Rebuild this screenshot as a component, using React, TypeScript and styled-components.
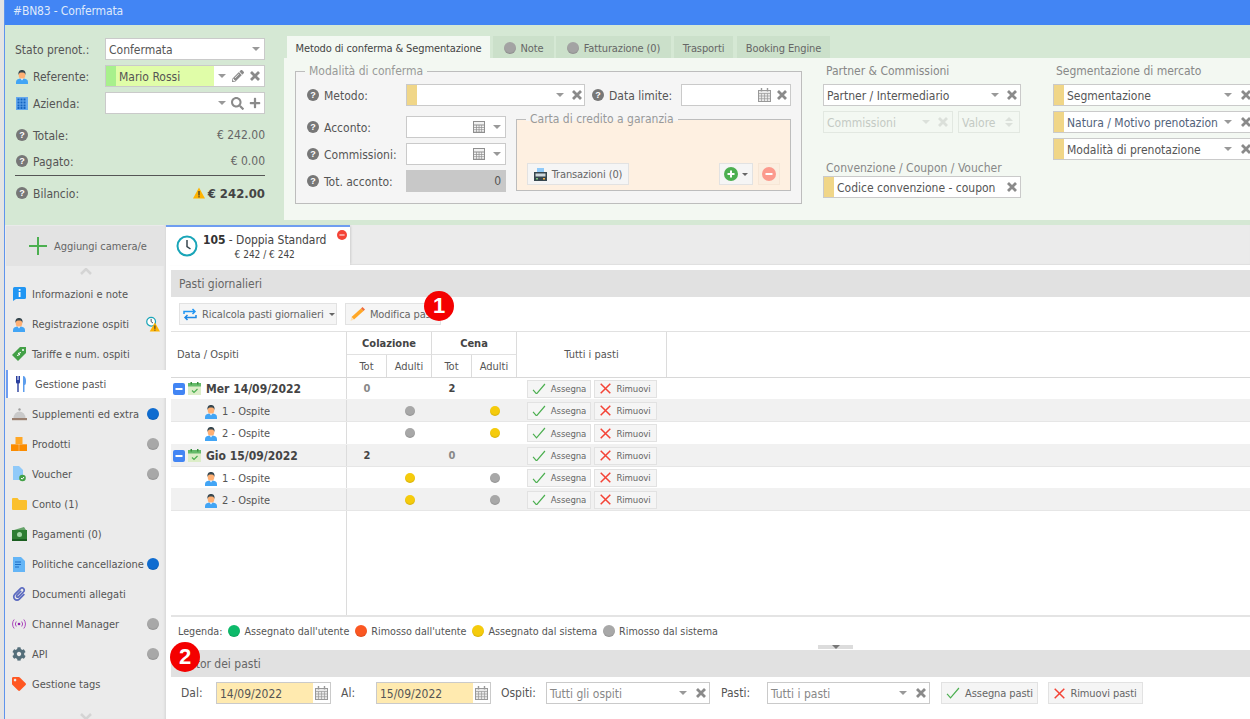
import React from 'react';
import styled, { createGlobalStyle } from 'styled-components';
import { FaPencilAlt, FaSearch, FaPlus, FaMinus, FaCog, FaPaperclip, FaTag } from 'react-icons/fa';

const Global = createGlobalStyle`
  html, body { margin: 0; padding: 0; background: #fff; }
  body { font-family: "DejaVu Sans Condensed", "DejaVu Sans", "Noto Sans", sans-serif; font-size: 12px; color: #444; }
  * { box-sizing: border-box; }
`;

const Page = styled.div`
  width: 1250px; height: 719px; overflow: hidden; display: flex; background: #e8e8e8;
`;
const Edge = styled.div`
  width: 5px; flex: none; background: #e4e4e4; border-right: 1px solid #5f94ec;
`;
const Main = styled.div`
  width: 1245px; flex: none; display: flex; flex-direction: column;
`;
const TitleBar = styled.div`
  height: 25px; flex: none; background: #4285f4; color: #dfe9fb; font-size: 12px; line-height: 22px; padding-left: 8px; letter-spacing: -0.15px;
`;
const TopPanel = styled.div`
  height: 200px; flex: none; display: flex; background: #d5e8d4; padding-bottom: 5px;
`;
const LeftForm = styled.div`
  width: 279px; flex: none; padding: 13px 19px 0 10px; display: flex; flex-direction: column;
`;
const FieldRow = styled.div`
  display: grid; grid-template-columns: 90px 160px; align-items: center; height: 22px; margin-bottom: 5px;
`;
const Label = styled.div`
  display: flex; align-items: center; gap: 4px; color: #555; white-space: nowrap; padding-top: 1px;
`;
const IconSlot = styled.span`
  width: 14px; display: inline-flex; justify-content: center; align-items: center; flex: none; margin-top: -1px;
`;
const Field = styled.div<{ $w?: number; $disabled?: boolean; $bg?: string; $shift?: number }>`
  ${p => (p.$w ? `width: ${p.$w}px; flex: none;` : '')}
  ${p => (p.$shift ? `margin-top: ${p.$shift}px;` : '')}
  height: 22px; border: 1px solid ${p => (p.$disabled ? '#e2e8e1' : '#cacaca')};
  background: ${p => (p.$disabled ? 'transparent' : p.$bg || '#fff')};
  display: flex; align-items: center; color: ${p => (p.$disabled ? '#c4cac4' : '#555')}; overflow: hidden;
`;
const Accent = styled.span<{ $color: string }>`
  width: 10px; align-self: stretch; flex: none; background: ${p => p.$color};
`;
const FieldText = styled.span<{ $bg?: string; $color?: string }>`
  flex: 1; min-width: 0; padding: 1px 0 0 3px; white-space: nowrap; overflow: hidden; align-self: stretch; line-height: 20px;
  ${p => (p.$bg ? `background: ${p.$bg};` : '')}
  ${p => (p.$color ? `color: ${p.$color};` : '')}
`;
const Tools = styled.span<{ $gap?: number; $pr?: number; $pl?: number }>`
  display: inline-flex; align-items: center; gap: ${p => p.$gap ?? 7}px; padding: 0 ${p => p.$pr ?? 4}px 0 ${p => p.$pl ?? 6}px; color: #8a8a8a; flex: none;
`;
const Caret = styled.span<{ $light?: boolean }>`
  width: 0; height: 0; border-left: 4px solid transparent; border-right: 4px solid transparent;
  border-top: 4px solid ${p => (p.$light ? '#dbe0da' : '#999')}; display: inline-block;
`;
const SumRow = styled.div<{ $bold?: boolean; $h?: number }>`
  height: ${p => p.$h ?? 26}px; display: flex; justify-content: space-between; align-items: center;
  color: #666; ${p => (p.$bold ? 'font-weight: 700; font-size: 13px; color: #444;' : '')}
`;
const SumValue = styled.span`
  display: inline-flex; align-items: center; gap: 3px;
`;
const SumRule = styled.div`
  height: 1px; background: #555; margin: 1px 0 5px;
`;
const SumLabelWrap = styled(Label)`
  font-weight: 400; font-size: 12px; color: #555;
`;
const SumGap = styled.div`
  height: 3px; flex: none;
`;
const Right = styled.div`
  flex: 1; min-width: 0; display: flex; flex-direction: column; padding-top: 11px;
`;
const TabStrip = styled.div`
  display: flex; height: 22px; flex: none; gap: 3px; padding-left: 3px; font-size: 11px; letter-spacing: -0.12px;
`;
const Tab = styled.div<{ $w: number; $active?: boolean; $ml?: number }>`
  width: ${p => p.$w}px; flex: none; display: flex; align-items: center; justify-content: center; gap: 5px;
  ${p => (p.$ml ? `margin-left: ${p.$ml}px;` : '')}
  background: ${p => (p.$active ? '#f3f8f2' : '#cbe0ca')}; color: ${p => (p.$active ? '#444' : '#666')}; white-space: nowrap; padding-top: 2px;
`;
const Dot = styled.span<{ $color: string; $size?: number }>`
  width: ${p => p.$size ?? 12}px; height: ${p => p.$size ?? 12}px; border-radius: 50%; flex: none; display: inline-block;
  background: ${p => p.$color}; box-shadow: inset 0 -1px 1px rgba(0,0,0,.12);
`;
const TabBody = styled.div`
  flex: 1; background: #f3f8f2; display: flex; padding: 13px 0 0 11px; overflow: hidden;
`;
const Group = styled.div<{ $w: number; $h: number; $bg: string }>`
  width: ${p => p.$w}px; height: ${p => p.$h}px; flex: none;
  border: 1px solid #bdbdbd; background: ${p => p.$bg};
`;
const Legend = styled.div`
  color: #999; font-size: 12px; line-height: 14px; margin: -8px 0 0 9px; padding: 0 4px; width: fit-content; white-space: nowrap;
  background: linear-gradient(#f3f8f2 9px, #f5f5f5 9px);
`;
const CardLegend = styled(Legend)`
  background: linear-gradient(#f5f5f5 9px, #fef0e1 9px);
`;
const FormGrid = styled.div`
  display: flex; flex-direction: column; padding: 6px 10px 0 10px;
`;
const FormLine = styled.div`
  display: flex; align-items: center; height: 22px;
`;
const SplitRow = styled.div`
  display: flex; margin-top: 10px;
`;
const ColStack = styled.div`
  display: flex; flex-direction: column; gap: 5px; width: 200px; flex: none;
`;
const StackLabel = styled(Label)`
  width: 100px; flex: none; height: 22px;
`;
const StackRow = styled.div`
  display: flex; align-items: center;
`;
const GapLabel = styled(Label)`
  margin-left: 6px; width: 90px; flex: none;
`;
const TotalField = styled(Field)`
  background: #c8c8c8; border-color: #c8c8c8; justify-content: flex-end; padding-right: 4px; color: #555;
`;
const CardBox = styled(Group)`
  margin: 3px 0 0 10px;
`;
const CardActions = styled.div`
  display: flex; align-items: center; padding: 37px 10px 0 10px;
`;
const Btn = styled.div<{ $w?: number; $h?: number; $fs?: number; $start?: number; $gap?: number }>`
  ${p => (p.$w ? `width: ${p.$w}px;` : '')} height: ${p => p.$h ?? 22}px; flex: none; display: inline-flex; align-items: center;
  justify-content: ${p => (p.$start !== undefined ? 'flex-start' : 'center')}; gap: ${p => p.$gap ?? 5}px;
  ${p => (p.$start !== undefined ? `padding-left: ${p.$start}px;` : '')}
  background: #f5f5f5; border: 1px solid #e2e2e2; color: #666; font-size: ${p => p.$fs ?? 11}px; white-space: nowrap; letter-spacing: -0.1px;
`;
const Spacer = styled.div`
  flex: 1;
`;
const GhostBtn = styled(Btn)`
  background: #fbeee0; border-color: #f6e6d6; margin-left: 5px;
`;
const SideCol = styled.div<{ $w: number; $ml: number }>`
  width: ${p => p.$w}px; flex: none; margin-left: ${p => p.$ml}px; display: flex; flex-direction: column; gap: 5px;
`;
const ColTitle = styled.div`
  color: #888; height: 14px; line-height: 14px; margin: -7px 0 1px 3px; white-space: nowrap;
`;
const ColTitleLow = styled(ColTitle)`
  margin: 23px 0 0 3px;
`;
const DisabledRow = styled.div`
  display: flex; gap: 5px;
`;
const Spin = styled.span`
  display: inline-flex; flex-direction: column; gap: 2px; margin: 0 6px 0 auto; flex: none;
`;
const SpinUp = styled.span`
  width: 0; height: 0; border-left: 4px solid transparent; border-right: 4px solid transparent; border-bottom: 4px solid #dbe0da;
`;
const SpinDown = styled(SpinUp)`
  border-bottom: 0; border-top: 4px solid #dbe0da;
`;
const ValueText = styled.span`
  padding: 1px 0 0 3px; line-height: 20px; white-space: nowrap;
`;
const Lower = styled.div`
  flex: 1; min-height: 0; display: flex;
`;
const Sidebar = styled.div`
  width: 161px; flex: none; background: #ebebeb; display: flex; flex-direction: column; align-items: stretch; box-shadow: inset -3px 0 3px -2px rgba(0,0,0,.1);
`;
const AddBtn = styled.div`
  height: 40px; margin: 1px 2px 0 1px; background: #e3e3e3; display: flex; align-items: center; padding-left: 23px; gap: 7px; color: #666; font-size: 11px; flex: none; letter-spacing: -0.05px;
`;
const AddText = styled.span`
  padding-top: 1px;
`;
const ChevronUpBox = styled.div`
  height: 13px; display: flex; justify-content: center; align-items: flex-start; padding-top: 2px; flex: none;
`;
const ChevronDownBox = styled.div`
  height: 14px; margin-bottom: -4px; display: flex; justify-content: center; align-items: center; flex: none;
`;
const MenuList = styled.div`
  display: flex; flex-direction: column; flex: none;
`;
const MenuItem = styled.div<{ $active?: boolean }>`
  height: 30px; display: flex; align-items: center; padding-left: 4px; gap: 3px; color: #555; font-size: 11px; white-space: nowrap;
  ${p => (p.$active ? 'background: #fff; border-left: 2px solid #6f9df0; margin: 1px 0 1px 1px; height: 28px; padding-left: 3px; gap: 4px;' : '')}
`;
const MenuIcon = styled.span`
  width: 20px; height: 18px; flex: none; display: inline-flex; justify-content: center; align-items: center;
`;
const MenuLabel = styled.span`
  flex: 1; min-width: 0;
`;
const MenuEnd = styled.span`
  width: 14px; margin-right: 6px; flex: none; display: inline-flex; justify-content: center;
`;
const Content = styled.div`
  flex: 1; min-width: 0; display: flex; flex-direction: column; background: #fff; position: relative;
`;
const RoomBar = styled.div`
  height: 40px; flex: none; background: #ebebeb; display: flex; box-shadow: inset 0 -1px 1px rgba(0,0,0,.05);
`;
const RoomTab = styled.div`
  width: 184px; flex: none; background: #fff; border-top: 2px solid #6f9df0; display: flex; align-items: center; padding-left: 10px; gap: 5px; position: relative; box-shadow: 2px 0 2px -1px rgba(0,0,0,.12);
`;
const RoomText = styled.div`
  display: flex; flex-direction: column; align-items: center; line-height: 14px; color: #444; margin-top: 3px;
`;
const RoomTitle = styled.div`
  font-size: 12px; white-space: nowrap; letter-spacing: -0.03px;
`;
const RoomNum = styled.b`
  font-weight: 700; color: #333;
`;
const RoomPrice = styled.div`
  font-size: 10px; margin-top: 1px;
`;
const RoomClose = styled.span`
  position: absolute; right: 3px; top: 3px; width: 10px; height: 10px; border-radius: 50%; background: #f44336; display: flex; align-items: center; justify-content: center;
`;
const Pane = styled.div`
  flex: 1; min-height: 0; margin: 5px 0 0 5px; display: flex; flex-direction: column;
`;
const SectionTitle = styled.div`
  height: 27px; flex: none; background: #e1e1e1; color: #666; line-height: 28px; padding-left: 8px;
`;
const Toolbar = styled.div`
  height: 35px; flex: none; display: flex; align-items: flex-start; gap: 8px; padding: 6px 0 0 8px; border-bottom: 1px solid #e1e1e1;
`;
const ToolCaret = styled.span`
  width: 0; height: 0; border-left: 3px solid transparent; border-right: 3px solid transparent; border-top: 3px solid #666; display: inline-block;
`;
const GridRow = styled.div<{ $h: number; $shade?: boolean }>`
  height: ${p => p.$h}px; flex: none; display: grid; grid-template-columns: 176px 40px 45px 40px 45px 150px 1fr;
  background: ${p => (p.$shade ? '#f1f1f1' : '#fff')}; border-bottom: 1px solid ${p => (p.$shade ? '#e6e6e6' : '#f1f1f1')};
`;
const HeadGrid = styled.div`
  height: 46px; flex: none; display: grid; grid-template-columns: 176px 85px 85px 150px 1fr; grid-template-rows: 23px 22px; border-bottom: 1px solid #d8d8d8;
`;
const HeadCell = styled.div<{ $span?: boolean; $left?: boolean; $bold?: boolean; $under?: boolean }>`
  display: flex; align-items: center; justify-content: ${p => (p.$left ? 'flex-start' : 'center')}; font-size: 11px; color: #555;
  ${p => (p.$left ? 'padding-left: 6px;' : '')}
  ${p => (p.$span ? 'grid-row: 1 / span 2;' : '')}
  ${p => (p.$bold ? 'font-weight: 700; color: #444;' : '')}
  ${p => (p.$under ? 'border-bottom: 1px solid #e1e1e1;' : '')}
  border-right: 1px solid #dcdcdc;
`;
const HeadSplit = styled.div<{ $col: number }>`
  display: grid; grid-template-columns: 40px 45px; grid-row: 2; grid-column: ${p => p.$col};
`;
const HeadSub = styled.div`
  display: flex; align-items: center; justify-content: center; font-size: 11px; color: #555; border-right: 1px solid #dcdcdc;
`;
const NameCell = styled.div<{ $group?: boolean }>`
  display: flex; align-items: center; border-right: 1px solid #dcdcdc; white-space: nowrap;
  ${p => (p.$group ? 'padding-left: 2px; gap: 3px; font-weight: 700; color: #444; font-size: 12px;' : 'padding: 1px 0 0 33px; gap: 4px; color: #555; font-size: 11px;')}
`;
const ValCell = styled.div<{ $dim?: boolean }>`
  display: flex; align-items: center; justify-content: center; font-weight: 700; color: ${p => (p.$dim ? '#888' : '#444')}; font-size: 11px;
`;
const ActionCell = styled.div`
  display: flex; align-items: center; gap: 3px; padding-left: 10px;
`;
const Filler = styled.div`
  flex: 1; min-height: 0; border-bottom: 2px solid #e4e4e4;
`;
const FillerCol = styled.div`
  width: 176px; height: 100%; border-right: 1px solid #dcdcdc;
`;
const LegendBar = styled.div`
  height: 28px; flex: none; display: flex; align-items: center; gap: 6px; padding: 0 0 0 7px; font-size: 10.7px; color: #555; white-space: nowrap;
`;
const LegendItem = styled.span`
  display: inline-flex; align-items: center; gap: 4px;
`;
const Splitter = styled.div`
  height: 5px; flex: none; display: flex; padding-left: 647px;
`;
const SplitterHandle = styled.div`
  width: 35px; height: 4px; background: #dcdcdc; display: flex; justify-content: center;
`;
const SmallCaret = styled.span`
  width: 0; height: 0; border-left: 4px solid transparent; border-right: 4px solid transparent; border-top: 4px solid #777;
`;
const FilterBar = styled.div`
  height: 42px; flex: none; display: flex; align-items: flex-start; padding: 5px 0 0 10px; white-space: nowrap; color: #555;
`;
const FilterLabel = styled.span<{ $w: number }>`
  width: ${p => p.$w}px; flex: none; line-height: 23px;
`;
const DateText = styled.span`
  flex: 1; align-self: stretch; background: #ffeaaf; padding: 1px 0 0 3px; line-height: 20px; color: #555;
`;
const CalBox = styled.span`
  width: 17px; flex: none; display: inline-flex; justify-content: center;
`;
const Gap = styled.span<{ $w: number }>`
  width: ${p => p.$w}px; flex: none;
`;
const Badge = styled.div<{ $x: number; $y: number }>`
  position: absolute; left: ${p => p.$x}px; top: ${p => p.$y}px; width: 30px; height: 30px; border-radius: 50%; background: #f40000;
  color: #fff; font: 700 22px "Liberation Sans", sans-serif; display: flex; align-items: center; justify-content: center; z-index: 5;
`;
const HelpDot = styled.span`
  width: 12px; height: 12px; border-radius: 50%; background: #777; color: #fff; font: 700 9px/12px "Liberation Sans", sans-serif; text-align: center; display: inline-block; flex: none;
`;

const Help = () => <IconSlot><HelpDot>?</HelpDot></IconSlot>;
const X = ({ c = '#8a8a8a' }: { c?: string }) => (
  <svg width="10" height="10" viewBox="0 0 10 10" fill="none" stroke={c} strokeWidth="2.800"><path d="M1 1l8 8M9 1l-8 8" /></svg>
);

const Person = () => (
  <svg width="14" height="15" viewBox="0 0 14 15">
    <path d="M1 15v-2c0-2 2-3 4-3.400h4c2 .4 4 1.400 4 3.400v2z" fill="#42a5f5" />
    <ellipse cx="7" cy="6" rx="3.300" ry="4" fill="#ffb074" />
    <path d="M3.500 6C3 2 5 1 7 1s4 1 3.500 5C10 4 9 3.500 7 3.500S4 4 3.500 6z" fill="#37474f" />
    <path d="M5.500 9.500L7 11.500l1.500-2z" fill="#e8f4ff" />
  </svg>
);
const Building = () => (
  <svg width="12" height="13" viewBox="0 0 12 13">
    <rect width="12" height="13" fill="#64a8ee" />
    {[1.5, 4.5, 7.5].map(x => [1.5, 4.5, 7.5, 10].map(y => <rect key={`${x}-${y}`} x={x} y={y} width="2" height="2" fill="#1565c0" />))}
  </svg>
);
const Warn = ({ s = 12 }: { s?: number }) => (
  <svg width={s} height={s} viewBox="0 0 12 12">
    <path d="M6 .5L12 11.500H0z" fill="#ffb300" />
    <rect x="5.400" y="4" width="1.200" height="4.500" fill="#333" />
    <rect x="5.400" y="9.200" width="1.200" height="1.200" fill="#333" />
  </svg>
);
const ClockWarn = () => (
  <svg width="15" height="16" viewBox="0 0 15 16">
    <circle cx="5.500" cy="5.500" r="4.700" fill="#fff" stroke="#19a5b8" strokeWidth="1.300" />
    <path d="M5.500 2.500v3l2 1.500" stroke="#37474f" fill="none" />
    <path d="M9.500 6.500L15 16H4z" fill="#ffb300" />
    <rect x="9" y="9.500" width="1.100" height="3.700" fill="#333" />
    <rect x="9" y="14" width="1.100" height="1.100" fill="#333" />
  </svg>
);
const Calendar = () => (
  <svg width="13" height="14" viewBox="0 0 13 14" fill="none" stroke="#999">
    <rect x=".5" y="2.500" width="12" height="11" fill="#e9e9e9" />
    <path d="M.5 5.500h12M.5 8h12M.5 10.700h12M3.500 5.500v8M6.500 5.500v8M9.500 5.500v8" strokeWidth=".7" />
    <path d="M3.500 0v3.500M9.500 0v3.500" strokeWidth="1.400" />
  </svg>
);
const Calc = () => (
  <svg width="12" height="12" viewBox="0 0 12 12">
    <rect width="12" height="12" fill="#8f8f8f" />
    <rect x="1" y="1" width="10" height="2.500" fill="#f2f2f2" />
    {[4.5, 6.8, 9.1].map(y => [1, 3.7, 6.4, 9].map(x => <rect key={`${x}-${y}`} x={x} y={y} width="2" height="1.600" fill="#f2f2f2" />))}
  </svg>
);
const Check = ({ s = 14 }: { s?: number }) => (
  <svg width={s} height={s * 0.85} viewBox="0 0 14 12" fill="none" stroke="#4caf50" strokeWidth="1.200"><path d="M1 7l3.500 4L13 1" /></svg>
);
const Cross = ({ s = 11 }: { s?: number }) => (
  <svg width={s} height={s} viewBox="0 0 11 11" fill="none" stroke="#f44336" strokeWidth="1.500"><path d="M.7.7l9.600 9.600M10.300.7L.7 10.300" /></svg>
);
const CardTerminal = () => (
  <svg width="13" height="13" viewBox="0 0 13 13">
    <rect x="3" y="0" width="7" height="5" fill="#90caf9" />
    <rect x="0" y="4" width="13" height="9" fill="#37474f" />
    <rect x="1.500" y="5.500" width="10" height="3" fill="#cfd8dc" />
    <rect x="2" y="10" width="2" height="1.500" fill="#81c784" />
    <rect x="9" y="10" width="2" height="1.500" fill="#ffb74d" />
  </svg>
);
const Sync = () => (
  <svg width="14" height="13" viewBox="0 0 14 13" fill="none" stroke="#2196f3" strokeWidth="1.500">
    <path d="M1 6V3.500h11M9.500 1L12 3.500 9.500 6" />
    <path d="M13 7v2.500H2M4.500 7L2 9.500 4.500 12" stroke="#1e88e5" />
  </svg>
);
const Pencil = () => (
  <svg width="18" height="16" viewBox="0 0 18 16">
    <path d="M2.500 11L12 2.500 14.500 5 5 13.500z" fill="#ffa726" />
    <path d="M12 2.500L13.500 1 16 3.500 14.500 5z" fill="#ef6c3a" />
    <path d="M2.500 11L1.500 15 5 13.500z" fill="#ffe0b2" />
  </svg>
);
const ClockIcon = () => (
  <svg width="22" height="22" viewBox="0 0 22 22" fill="none">
    <circle cx="11" cy="11" r="9.500" stroke="#19a5b8" strokeWidth="2" />
    <path d="M11 5v6.500l3.500 2.500" stroke="#37474f" strokeWidth="1.500" />
  </svg>
);
const BigPlus = () => (
  <svg width="18" height="18" viewBox="0 0 18 18"><path d="M9 0v18M0 9h18" stroke="#4caf50" strokeWidth="2" /></svg>
);
const ChevronIcon = ({ down }: { down?: boolean }) => (
  <svg width="12" height="7" viewBox="0 0 12 7" fill="none" stroke="#d4d4d4" strokeWidth="2.500"><path d={down ? 'M1 1l5 5 5-5' : 'M1 6l5-5 5 5'} /></svg>
);
const DayMinus = () => (
  <svg width="12" height="12" viewBox="0 0 12 12"><rect width="12" height="12" rx="2" fill="#4285f4" /><rect x="2.500" y="5" width="7" height="2" fill="#fff" /></svg>
);
const DayCal = () => (
  <svg width="15" height="13" viewBox="0 0 15 13">
    <rect y="1" width="13" height="12" fill="#dcedc8" />
    <rect y="1" width="13" height="3.500" fill="#66bb6a" />
    <rect x="2.500" width="1.500" height="2.500" fill="#388e3c" />
    <rect x="9" width="1.500" height="2.500" fill="#388e3c" />
    <path d="M4 8.500l2 2 3.500-3.500" stroke="#4caf50" strokeWidth="1.200" fill="none" />
  </svg>
);

const InfoIcon = () => (
  <svg width="13" height="14" viewBox="0 0 13 14"><path d="M1.500 0h10A1.500 1.500 0 0 1 13 1.500v9a1.500 1.500 0 0 1-1.500 1.500H3L0 14V1.500A1.500 1.500 0 0 1 1.500 0z" fill="#2196f3" /><rect x="5.700" y="2" width="1.800" height="1.800" fill="#fff" /><rect x="5.700" y="5" width="1.800" height="5" fill="#fff" /></svg>
);
const PriceTag = () => (
  <svg width="14" height="14" viewBox="0 0 14 14"><path d="M8 0l6 0 0 6-8 8-6-6z" fill="#43a047" /><circle cx="11" cy="3" r="1" fill="#fff" /><path d="M5 8.500l3-1-2-1 3-1" stroke="#fff" fill="none" /></svg>
);
const Cutlery = () => (
  <svg width="12" height="16" viewBox="0 0 12 16"><path d="M1 0v6c0 1 .7 1.500 1.300 1.500V16h1.400V7.500C4.300 7.500 5 7 5 6V0H4v4H3.500V0h-1v4H2V0z" fill="#2a3f9e" /><path d="M8 0c2 0 3 2 3 5s-.6 4-1.500 4V16H8z" fill="#5c9ded" /></svg>
);
const Cloche = () => (
  <svg width="15" height="13" viewBox="0 0 15 13"><circle cx="7.500" cy="1.500" r="1.200" fill="#9e9e9e" /><path d="M1.500 10a6 6.500 0 0 1 12 0z" fill="#c9c9c9" /><rect y="10" width="15" height="2.200" fill="#9a8070" /></svg>
);
const Boxes = () => (
  <svg width="16" height="14" viewBox="0 0 16 14"><rect x="4.500" width="7" height="7" fill="#ffa726" /><rect y="7.300" width="7.800" height="6.700" fill="#fb8c00" /><rect x="8.200" y="7.300" width="7.800" height="6.700" fill="#fb8c00" /></svg>
);
const VoucherDoc = () => (
  <svg width="13" height="16" viewBox="0 0 13 16"><path d="M0 0h6l4 4v10H0z" fill="#90caf9" /><circle cx="9.500" cy="12" r="3.300" fill="#43a047" /><path d="M8 12l1.200 1.200L11 11" stroke="#fff" fill="none" /></svg>
);
const Folder = () => (
  <svg width="15" height="12" viewBox="0 0 15 12"><path d="M1 0h4.500l1.500 2h7a1 1 0 0 1 1 1v8a1 1 0 0 1-1 1H1a1 1 0 0 1-1-1V1a1 1 0 0 1 1-1z" fill="#fbc02d" /></svg>
);
const Money = () => (
  <svg width="15" height="14" viewBox="0 0 15 14"><path d="M2 3l10-3 2 3z" fill="#66a36a" /><rect y="3" width="15" height="9" fill="#2e7d32" /><ellipse cx="7.500" cy="7.500" rx="2.500" ry="2.500" fill="#a5d6a7" /><rect y="12" width="15" height="2" fill="#1b5e20" /></svg>
);
const PolicyDoc = () => (
  <svg width="12" height="15" viewBox="0 0 12 15"><path d="M0 0h8l4 4v11H0z" fill="#64b5f6" /><path d="M2 5h6M2 7.500h6M2 10h4" stroke="#1565c0" strokeWidth=".9" /></svg>
);
const Broadcast = () => (
  <svg width="14" height="12" viewBox="0 0 14 12" fill="none" stroke="#ab47bc" strokeWidth="1">
    <circle cx="7" cy="6" r="1.300" fill="#8e24aa" stroke="none" />
    <path d="M4.300 3.500a4 4 0 0 0 0 5M9.700 3.500a4 4 0 0 1 0 5M2.200 1.500a7 7 0 0 0 0 9M11.800 1.500a7 7 0 0 1 0 9" />
  </svg>
);

const menu: { label: string; icon: React.ReactNode; end?: React.ReactNode; active?: boolean }[] = [
  { label: 'Informazioni e note', icon: <InfoIcon /> },
  { label: 'Registrazione ospiti', icon: <Person />, end: <ClockWarn /> },
  { label: 'Tariffe e num. ospiti', icon: <PriceTag /> },
  { label: 'Gestione pasti', icon: <Cutlery />, active: true },
  { label: 'Supplementi ed extra', icon: <Cloche />, end: <Dot $color="#0f6cd0" /> },
  { label: 'Prodotti', icon: <Boxes />, end: <Dot $color="#a8a8a8" /> },
  { label: 'Voucher', icon: <VoucherDoc />, end: <Dot $color="#a8a8a8" /> },
  { label: 'Conto (1)', icon: <Folder /> },
  { label: 'Pagamenti (0)', icon: <Money /> },
  { label: 'Politiche cancellazione', icon: <PolicyDoc />, end: <Dot $color="#0f6cd0" /> },
  { label: 'Documenti allegati', icon: <FaPaperclip size={14} color="#5c6bc0" /> },
  { label: 'Channel Manager', icon: <Broadcast />, end: <Dot $color="#a8a8a8" /> },
  { label: 'API', icon: <FaCog size={14} color="#546e7a" />, end: <Dot $color="#a8a8a8" /> },
  { label: 'Gestione tags', icon: <FaTag size={14} color="#ff5722" /> },
];

const GRAY = '#a8a8a8';
const YEL = '#f5cb0c';
const rows: { h: number; shade?: boolean; name: string; group?: boolean; a?: string; b?: string; aDim?: boolean; bDim?: boolean; ca?: string; cb?: string }[] = [
  { h: 22, name: 'Mer 14/09/2022', group: true, a: '0', aDim: true, b: '2' },
  { h: 22, shade: true, name: '1 - Ospite', ca: GRAY, cb: YEL },
  { h: 23, name: '2 - Ospite', ca: GRAY, cb: YEL },
  { h: 22, shade: true, name: 'Gio 15/09/2022', group: true, a: '2', b: '0', bDim: true },
  { h: 22, name: '1 - Ospite', ca: YEL, cb: GRAY },
  { h: 22, shade: true, name: '2 - Ospite', ca: YEL, cb: GRAY },
];

export default function App() {
  return (
    <Page>
      <Global />
      <Edge />
      <Main>
        <TitleBar>#BN83 - Confermata</TitleBar>
        <TopPanel>
          <LeftForm>
            <FieldRow>
              <Label>Stato prenot.:</Label>
              <Field><FieldText>Confermata</FieldText><Tools $pr={4}><Caret /></Tools></Field>
            </FieldRow>
            <FieldRow>
              <Label><IconSlot><Person /></IconSlot>Referente:</Label>
              <Field>
                <Accent $color="#a8f08c" />
                <FieldText $bg="#e0fda8">Mario Rossi</FieldText>
                <Tools $gap={6} $pr={4} $pl={4}><Caret /><FaPencilAlt size={12} /><X /></Tools>
              </Field>
            </FieldRow>
            <FieldRow>
              <Label><IconSlot><Building /></IconSlot>Azienda:</Label>
              <Field><FieldText /><Tools $gap={5} $pr={3}><Caret /><FaSearch size={13} /><FaPlus size={12} /></Tools></Field>
            </FieldRow>
            <SumGap />
            <SumRow><Label><Help />Totale:</Label><SumValue>€ 242.00</SumValue></SumRow>
            <SumRow><Label><Help />Pagato:</Label><SumValue>€ 0.00</SumValue></SumRow>
            <SumRule />
            <SumRow $bold $h={24}><SumLabelWrap><Help />Bilancio:</SumLabelWrap><SumValue><Warn />€ 242.00</SumValue></SumRow>
          </LeftForm>
          <Right>
            <TabStrip>
              <Tab $w={203} $active>Metodo di conferma &amp; Segmentazione</Tab>
              <Tab $w={61}><Dot $color="#a3a3a3" />Note</Tab>
              <Tab $w={115} $ml={-1}><Dot $color="#a3a3a3" />Fatturazione (0)</Tab>
              <Tab $w={59}>Trasporti</Tab>
              <Tab $w={93} $ml={1}>Booking Engine</Tab>
            </TabStrip>
            <TabBody>
              <Group $w={507} $h={133} $bg="#f5f5f5">
                <Legend>Modalità di conferma</Legend>
                <FormGrid>
                  <FormLine>
                    <StackLabel><Help />Metodo:</StackLabel>
                    <Field $w={179}><Accent $color="#f0d688" /><FieldText /><Tools $gap={8} $pr={2}><Caret /><X /></Tools></Field>
                    <GapLabel><Help />Data limite:</GapLabel>
                    <Field $w={110}><FieldText /><Tools $gap={6} $pr={3}><Calendar /><X /></Tools></Field>
                  </FormLine>
                  <SplitRow>
                    <ColStack>
                      <StackRow><StackLabel><Help />Acconto:</StackLabel><Field $w={100}><FieldText /><Tools $gap={8} $pr={4}><Calc /><Caret /></Tools></Field></StackRow>
                      <StackRow><StackLabel><Help />Commissioni:</StackLabel><Field $w={100}><FieldText /><Tools $gap={8} $pr={4}><Calc /><Caret /></Tools></Field></StackRow>
                      <StackRow><StackLabel><Help />Tot. acconto:</StackLabel><TotalField $w={100}>0</TotalField></StackRow>
                    </ColStack>
                    <CardBox $w={275} $h={72} $bg="#fef0e1">
                      <CardLegend>Carta di credito a garanzia</CardLegend>
                      <CardActions>
                        <Btn $w={102}><CardTerminal />Transazioni (0)</Btn>
                        <Spacer />
                        <Btn $w={34} $gap={4}>
                          <svg width="14" height="14" viewBox="0 0 14 14"><circle cx="7" cy="7" r="7" fill="#4caf50" /><path d="M7 3.500v7M3.500 7h7" stroke="#fff" strokeWidth="2" /></svg>
                          <ToolCaret />
                        </Btn>
                        <GhostBtn $w={22}>
                          <svg width="14" height="14" viewBox="0 0 14 14"><circle cx="7" cy="7" r="7" fill="#fc9a8d" /><path d="M3.500 7h7" stroke="#fff" strokeWidth="2" /></svg>
                        </GhostBtn>
                      </CardActions>
                    </CardBox>
                  </SplitRow>
                </FormGrid>
              </Group>
              <SideCol $w={198} $ml={21}>
                <ColTitle>Partner &amp; Commissioni</ColTitle>
                <Field><FieldText>Partner / Intermediario</FieldText><Tools $gap={8} $pr={3}><Caret /><X /></Tools></Field>
                <DisabledRow>
                  <Field $w={130} $disabled><FieldText>Commissioni</FieldText><Tools $gap={8} $pr={4}><Caret $light /><X c="#dbe0da" /></Tools></Field>
                  <Field $w={62} $disabled><ValueText>Valore</ValueText><Spin><SpinUp /><SpinDown /></Spin></Field>
                </DisabledRow>
                <ColTitleLow>Convenzione / Coupon / Voucher</ColTitleLow>
                <Field $shift={-4}><Accent $color="#f0d688" /><FieldText>Codice convenzione - coupon</FieldText><Tools $pr={3}><X /></Tools></Field>
              </SideCol>
              <SideCol $w={200} $ml={32}>
                <ColTitle>Segmentazione di mercato</ColTitle>
                <Field><Accent $color="#f0d688" /><FieldText>Segmentazione</FieldText><Tools $gap={9} $pr={1}><Caret /><X /></Tools></Field>
                <Field><Accent $color="#f0d688" /><FieldText $color="#52627a">Natura / Motivo prenotazione</FieldText><Tools $gap={9} $pr={1}><Caret /><X /></Tools></Field>
                <Field><Accent $color="#f0d688" /><FieldText>Modalità di prenotazione</FieldText><Tools $gap={9} $pr={1}><Caret /><X /></Tools></Field>
              </SideCol>
            </TabBody>
          </Right>
        </TopPanel>
        <Lower>
          <Sidebar>
            <AddBtn><BigPlus /><AddText>Aggiungi camera/e</AddText></AddBtn>
            <ChevronUpBox><ChevronIcon /></ChevronUpBox>
            <MenuList>
              {menu.map(m => (
                <MenuItem key={m.label} $active={m.active}>
                  <MenuIcon>{m.icon}</MenuIcon>
                  <MenuLabel>{m.label}</MenuLabel>
                  {m.end && <MenuEnd>{m.end}</MenuEnd>}
                </MenuItem>
              ))}
            </MenuList>
            <Spacer />
            <ChevronDownBox><ChevronIcon down /></ChevronDownBox>
          </Sidebar>
          <Content>
            <RoomBar>
              <RoomTab>
                <ClockIcon />
                <RoomText>
                  <RoomTitle><RoomNum>105</RoomNum> - Doppia Standard</RoomTitle>
                  <RoomPrice>€ 242 / € 242</RoomPrice>
                </RoomText>
                <RoomClose><FaMinus size={6} color="#fff" /></RoomClose>
              </RoomTab>
            </RoomBar>
            <Pane>
              <SectionTitle>Pasti giornalieri</SectionTitle>
              <Toolbar>
                <Btn $w={158} $start={3}><Sync />Ricalcola pasti giornalieri<ToolCaret /></Btn>
                <Btn $w={96} $gap={3}><Pencil />Modifica pasti</Btn>
              </Toolbar>
              <HeadGrid>
                <HeadCell $span $left>Data / Ospiti</HeadCell>
                <HeadCell $bold $under>Colazione</HeadCell>
                <HeadCell $bold $under>Cena</HeadCell>
                <HeadCell $span>Tutti i pasti</HeadCell>
                <HeadSplit $col={2}><HeadSub>Tot</HeadSub><HeadSub>Adulti</HeadSub></HeadSplit>
                <HeadSplit $col={3}><HeadSub>Tot</HeadSub><HeadSub>Adulti</HeadSub></HeadSplit>
              </HeadGrid>
              {rows.map((r, i) => (
                <GridRow key={i} $h={r.h} $shade={r.shade}>
                  <NameCell $group={r.group}>
                    {r.group ? <><DayMinus /><DayCal /></> : <Person />}
                    {r.name}
                  </NameCell>
                  <ValCell $dim={r.aDim}>{r.a}</ValCell>
                  <ValCell>{r.ca && <Dot $color={r.ca} $size={10} />}</ValCell>
                  <ValCell $dim={r.bDim}>{r.b}</ValCell>
                  <ValCell>{r.cb && <Dot $color={r.cb} $size={10} />}</ValCell>
                  <ActionCell>
                    <Btn $w={64} $h={18} $fs={9.5}><Check />Assegna</Btn>
                    <Btn $w={63} $h={18} $fs={9.5}><Cross />Rimuovi</Btn>
                  </ActionCell>
                </GridRow>
              ))}
              <Filler><FillerCol /></Filler>
              <LegendBar>
                Legenda:
                <LegendItem><Dot $color="#0dba6a" />Assegnato dall'utente</LegendItem>
                <LegendItem><Dot $color="#fb5722" />Rimosso dall'utente</LegendItem>
                <LegendItem><Dot $color={YEL} />Assegnato dal sistema</LegendItem>
                <LegendItem><Dot $color={GRAY} />Rimosso dal sistema</LegendItem>
              </LegendBar>
              <Splitter><SplitterHandle><SmallCaret /></SplitterHandle></Splitter>
              <SectionTitle>Editor dei pasti</SectionTitle>
              <FilterBar>
                <FilterLabel $w={35}>Dal:</FilterLabel>
                <Field $w={115}><DateText>14/09/2022</DateText><CalBox><Calendar /></CalBox></Field>
                <Gap $w={10} />
                <FilterLabel $w={35}>Al:</FilterLabel>
                <Field $w={115}><DateText>15/09/2022</DateText><CalBox><Calendar /></CalBox></Field>
                <Gap $w={10} />
                <FilterLabel $w={45}>Ospiti:</FilterLabel>
                <Field $w={164}><FieldText $color="#888">Tutti gli ospiti</FieldText><Tools $gap={9} $pr={3}><Caret /><X /></Tools></Field>
                <Gap $w={11} />
                <FilterLabel $w={46}>Pasti:</FilterLabel>
                <Field $w={163}><FieldText $color="#888">Tutti i pasti</FieldText><Tools $gap={9} $pr={3}><Caret /><X /></Tools></Field>
                <Gap $w={11} />
                <Btn $w={97}><Check />Assegna pasti</Btn>
                <Gap $w={10} />
                <Btn $w={95}><Cross />Rimuovi pasti</Btn>
              </FilterBar>
            </Pane>
            <Badge $x={258} $y={66}>1</Badge>
            <Badge $x={4} $y={417}>2</Badge>
          </Content>
        </Lower>
      </Main>
    </Page>
  );
}
